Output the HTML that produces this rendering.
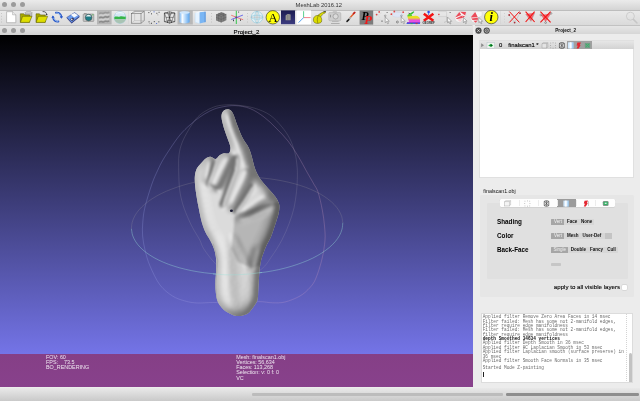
<!DOCTYPE html>
<html><head><meta charset="utf-8"><title>MeshLab 2016.12</title>
<style>

html,body{margin:0;padding:0;background:#e4e4e4;}
body{width:640px;height:401px;overflow:hidden;font-family:"Liberation Sans",sans-serif;}
#win{will-change:transform;position:relative;width:640px;height:401px;overflow:hidden;background:#ececec;}
.abs{position:absolute;}
.t{position:absolute;white-space:nowrap;line-height:1;color:#222;}
#titlebar{left:0;top:0;width:640px;height:10px;background:linear-gradient(#ebebeb,#d4d4d4);}
#toolbar{left:0;top:10px;width:640px;height:15px;background:linear-gradient(#e9e9e9,#dadada);border-top:0.5px solid #bdbdbd;box-sizing:border-box;}
#subtitle{left:0;top:25px;width:473.4px;height:10px;border-top-right-radius:1.5px;background:linear-gradient(#e8e8e8,#d2d2d2);border-top:0.5px solid #c2c2c2;box-sizing:border-box;}
#docktitle{left:474.5px;top:25px;width:165.5px;height:9.4px;background:linear-gradient(#e6e6e6,#d6d6d6);border-top:0.5px solid #c2c2c2;box-sizing:border-box;}
.dot{position:absolute;width:5px;height:5px;border-radius:50%;background:#9b9b9b;}
#gl{left:0;top:35.3px;width:473.2px;height:352.2px;background:linear-gradient(#000000,#8080ff);overflow:hidden;}
#band{left:0;top:318.5px;width:473.5px;height:34px;background:linear-gradient(#853f86,#88418c);}
#statusbar{left:0;top:388px;width:640px;height:13px;background:linear-gradient(#e9e9e9,#c9c9c9);}
.glt{position:absolute;white-space:nowrap;line-height:1;color:#eee6f0;font-size:5.4px;}

#glsvg{position:absolute;left:0;top:-0.3px;}

#dock{left:474px;top:35px;width:166px;height:353px;background:#ececec;}
#layers{left:479.4px;top:40.3px;width:155px;height:137.9px;background:#fff;border:0.5px solid #e0e0e0;box-sizing:border-box;}
#lrow{left:0;top:0;width:154px;height:8.2px;background:linear-gradient(#e6e6e6,#d2d2d2);}
#lsel{left:86.6px;top:0;width:24.8px;height:8.2px;background:#a0a0a0;}
.lt{font-size:5.9px;color:#000;top:1.6px;-webkit-text-stroke:0.12px #000;}
#gbox{left:480.2px;top:194.6px;width:153.8px;height:102px;background:#e6e6e6;border-radius:1.5px;}
#pane{left:487.3px;top:203px;width:140.7px;height:76px;background:#e0e0e0;border-radius:1px;}
#tabs{left:499.7px;top:198.6px;width:115.2px;height:8.8px;background:#fefefe;border-radius:1px;box-shadow:0 0.3px 0.5px rgba(0,0,0,.25);overflow:hidden;}
#tabs i{position:absolute;top:1.4px;width:0.5px;height:6px;background:#ececec;}
#tabsel{left:57.3px;top:0;width:19.2px;height:8.8px;background:#9b9b9b;}
.lab{font-size:6.3px;font-weight:bold;color:#000;left:497px;}
.seg{position:absolute;height:6.3px;background:#d7d7d7;border-radius:0.5px;}
.seg span{position:absolute;top:1.1px;font-size:4.5px;line-height:1;color:#111;white-space:nowrap;font-weight:bold;}
.seg b{position:absolute;left:0;top:0;height:6.3px;background:#a6a6a6;border-radius:0.5px 0 0 0.5px;}
.seg b span{color:#f0f0f0;font-weight:normal}
#logbox{left:480.5px;top:313px;width:152.2px;height:69.6px;background:#fff;border:0.5px solid #dcdcdc;box-sizing:border-box;overflow:hidden;}
.lg{position:absolute;left:1.2px;white-space:pre;font-family:"Liberation Mono",monospace;font-size:4.45px;line-height:1;color:#6c6c6c;}
.lg.b{font-weight:bold;color:#111;}

</style></head>
<body>
<div id="win">

<div id="titlebar" class="abs">
 <div class="dot" style="left:2px;top:2.3px"></div><div class="dot" style="left:11px;top:2.3px"></div><div class="dot" style="left:20px;top:2.3px"></div>
 <div class="t" style="left:295.6px;top:2.9px;font-size:5.8px;color:#333">MeshLab 2016.12</div>
</div>
<div id="toolbar" class="abs"></div>
<svg class="abs" style="left:0;top:10px" width="640" height="15" viewBox="0 10 640 15">
<rect x="1.3" y="13.00" width="0.7" height="0.9" fill="#b4b4b4"/><rect x="1.3" y="15.85" width="0.7" height="0.9" fill="#b4b4b4"/><rect x="1.3" y="18.70" width="0.7" height="0.9" fill="#b4b4b4"/><rect x="1.3" y="21.55" width="0.7" height="0.9" fill="#b4b4b4"/>
<path d="M6.6 11.7 H12.6 L15.8 14.8 V22.7 H6.6 Z" fill="#fff" stroke="#9a9a9a" stroke-width="0.6"/><path d="M12.6 11.7 V14.8 H15.8" fill="#eee" stroke="#9a9a9a" stroke-width="0.5"/>
<g><ellipse cx="28.6" cy="12.6" rx="3.3" ry="1.1" fill="#d8d8d8" stroke="#777" stroke-width="0.4"/><path d="M25.3 12.6 V16.4 H31.9 V12.6" fill="#bdbdbd" stroke="#777" stroke-width="0.4"/><path d="M20.3 13.8 H23.8 L24.8 14.9 H29.6 V22.3 H20.3 Z" fill="#a8a800" stroke="#55550a" stroke-width="0.5"/><path d="M22.6 16.3 H32 L29.4 22.4 H20.4 Z" fill="#dede00" stroke="#55550a" stroke-width="0.5"/></g>
<g><path d="M36.0 13.8 H39.5 L40.5 14.9 H45.3 V22.3 H36.0 Z" fill="#a8a800" stroke="#55550a" stroke-width="0.5"/><path d="M38.3 16.3 H47.7 L45.1 22.4 H36.1 Z" fill="#dede00" stroke="#55550a" stroke-width="0.5"/><path d="M42.6 11.6 C45 11.3 46.6 12.6 46.7 14.6" fill="none" stroke="#222" stroke-width="0.7"/><path d="M45.7 14.2 L46.8 15.6 L47.5 13.9Z" fill="#222"/></g>
<g fill="none" stroke-linecap="round"><path d="M56 12.7 C58.6 12.2 61 14 61.4 17" stroke="#2a58c8" stroke-width="1.9"/><path d="M56.6 12.9 C58.4 12.8 60.2 14.2 60.7 16.2" stroke="#a4ccf8" stroke-width="0.8"/><path d="M58.4 21.5 C55.8 22 53.4 20.2 53 17.2" stroke="#2a58c8" stroke-width="1.9"/><path d="M57.8 21.3 C56 21.4 54.2 20 53.7 18" stroke="#a4ccf8" stroke-width="0.8"/><path d="M59.8 16.6 L63 16.2 L61.6 18.8Z" fill="#2a58c8" stroke="none"/><path d="M54.6 17.6 L51.4 18 L52.8 15.4Z" fill="#2a58c8" stroke="none"/></g>
<g><path d="M66.8 17.4 L74.6 12.6 L79.4 16.2 L71.6 22.6 Z" fill="#6a9cf0" stroke="#2c3c88" stroke-width="0.5"/><path d="M70.8 14.8 L74.5 12.9 L77.8 15.2 L74.2 17.5 Z" fill="#fafafa"/><path d="M69.8 19.2 L72.6 17.5 L74.6 19.1 L72 21.2 Z" fill="#3a3a5a"/><path d="M70.6 19.3 L71.8 18.6 L72.8 19.4 L71.6 20.2Z" fill="#e8e8f0"/><path d="M71.6 22.6 L79.4 16.2 V17.2 L71.6 23.5 L66.8 18.3 V17.4Z" fill="#2c3c88"/></g>
<g><rect x="83.2" y="14.0" width="10.6" height="7.4" rx="0.6" fill="#c4c4c4" stroke="#777" stroke-width="0.5"/><rect x="84" y="13" width="2.6" height="1.2" fill="#999"/><circle cx="88.6" cy="17.6" r="3.3" fill="#1d7c86" stroke="#444" stroke-width="0.5"/><path d="M85.8 16.6 A3 3 0 0 1 91.4 16.6 Z" fill="#e8f4f4"/><rect x="92.4" y="14.4" width="0.9" height="0.9" fill="#3c3"/></g>
<rect x="97" y="10.2" width="14.6" height="14.3" fill="#b5b5b5"/>
<path d="M99.2 22.5 C101 20.1 102.6 23.1 104.2 21.6 C105.8 20.1 107.4 22.9 109.2 20.7" fill="none" stroke="#8a8a8a" stroke-width="1.5"/>
<path d="M99.2 20.3 C101 17.9 102.6 20.9 104.2 19.4 C105.8 17.9 107.4 20.7 109.2 18.5" fill="none" stroke="#d0d0d0" stroke-width="1.5"/>
<path d="M99.2 18.1 C101 15.7 102.6 18.7 104.2 17.2 C105.8 15.7 107.4 18.5 109.2 16.3" fill="none" stroke="#8a8a8a" stroke-width="1.5"/>
<path d="M99.2 15.9 C101 13.5 102.6 16.5 104.2 15.0 C105.8 13.5 107.4 16.3 109.2 14.1" fill="none" stroke="#d0d0d0" stroke-width="1.5"/>
<path d="M99.2 13.8 C101 11.4 102.6 14.4 104.2 12.9 C105.8 11.4 107.4 14.2 109.2 12.0" fill="none" stroke="#9a9a9a" stroke-width="1.5"/>
<g><circle cx="120" cy="17.5" r="5.9" fill="#d4e6f4" stroke="#8cc4dc" stroke-width="0.5"/><path d="M114.3 17.2 C116 15.8 118 17.4 120 16.4 C122 15.6 124 17 125.8 16.6 L125.7 19.2 L114.4 19.2Z" fill="#35b648"/><path d="M114.4 19.2 H125.7 C125 21.6 123 23.2 120 23.4 C117 23.2 115 21.6 114.4 19.2Z" fill="#a9c4b4"/><path d="M116 13.4 C118 12.4 122 12.4 124 13.4" stroke="#fff" stroke-width="0.8" fill="none"/></g>
<rect x="128.3" y="11" width="0.5" height="13" fill="#d0d0d0"/>
<g fill="#e4e4e4" stroke="#666" stroke-width="0.55"><rect x="131.4" y="13.6" width="9.6" height="9.6"/><path d="M131.4 13.6 L134.6 11.3 H144.3 L141 13.6 M144.3 11.3 V20.6 L141 23.2" fill="none"/><path d="M134.6 11.3 V20.6 H144.3 M134.6 20.6 L131.4 23.2" stroke="#aaa" stroke-width="0.4" fill="none"/></g>
<rect x="148.4" y="12.2" width="0.9" height="0.9" fill="#222"/><rect x="151.0" y="13.4" width="0.9" height="0.9" fill="#222"/><rect x="153.6" y="11.4" width="0.9" height="0.9" fill="#35c"/><rect x="156.4" y="12.8" width="0.9" height="0.9" fill="#222"/><rect x="158.6" y="11.8" width="0.9" height="0.9" fill="#222"/><rect x="150.0" y="11.2" width="0.9" height="0.9" fill="#999"/><rect x="148.6" y="21.4" width="0.9" height="0.9" fill="#222"/><rect x="151.0" y="22.8" width="0.9" height="0.9" fill="#222"/><rect x="153.8" y="21.2" width="0.9" height="0.9" fill="#222"/><rect x="156.2" y="23.0" width="0.9" height="0.9" fill="#35c"/><rect x="158.4" y="21.4" width="0.9" height="0.9" fill="#222"/><rect x="149.4" y="23.2" width="0.9" height="0.9" fill="#999"/><rect x="157.4" y="14.4" width="0.9" height="0.9" fill="#999"/>
<g fill="#e8e8e8" stroke="#222" stroke-width="0.55"><path d="M164.4 13 Q169.5 10.6 174.8 13 V21.6 Q169.5 24.4 164.4 21.6 Z"/><path d="M164.4 13 Q169.5 15 174.8 13 M164.4 21.6 Q169.5 19.4 174.8 21.6 M167.4 12 L171.6 23 M171.6 12 L167.4 23 M164.4 13 L168 23 M174.8 13 L171 23 M166 17.4 H173.4 M169.6 11.6 V23.6" fill="none" stroke-width="0.45"/></g>
<rect x="177.5" y="10.2" width="15.3" height="14.3" fill="#b7b7b7"/>
<defs><linearGradient id="cy" x1="0" x2="1"><stop offset="0" stop-color="#7db8f4"/><stop offset="0.28" stop-color="#f8fcff"/><stop offset="0.5" stop-color="#c4e0fb"/><stop offset="1" stop-color="#5aa4ee"/></linearGradient></defs>
<path d="M179.6 12.4 Q184.6 10.4 189.6 12.4 V22.2 Q184.6 24.6 179.6 22.2 Z" fill="url(#cy)"/><ellipse cx="184.6" cy="12.5" rx="5" ry="1.3" fill="#cfe6fc"/>
<g><path d="M195.2 13.0 L199.6 11.8 V23.6 L195.2 22.2 Z" fill="#e6f3ff"/><path d="M195.2 13.0 L198.6 11.5 L204.8 11.7 L199.6 12.6Z" fill="#f6fbff"/><path d="M199.6 12.2 L204.8 11.7 V22.2 L199.6 23.6 Z" fill="#7ab6f4"/><rect x="204.6" y="11.7" width="1" height="10.5" fill="#3c86dc"/><path d="M195.2 13.0 V22.2 L199.6 23.6" fill="none" stroke="#b4d8f8" stroke-width="0.4"/></g>
<rect x="211.2" y="13.00" width="0.7" height="0.9" fill="#b4b4b4"/><rect x="211.2" y="15.85" width="0.7" height="0.9" fill="#b4b4b4"/><rect x="211.2" y="18.70" width="0.7" height="0.9" fill="#b4b4b4"/><rect x="211.2" y="21.55" width="0.7" height="0.9" fill="#b4b4b4"/>
<g><path d="M216 14.4 L221.4 12 L226.4 14.2 V20.2 L221.2 22.6 L216 20.4 Z" fill="#7e7e7e"/><path d="M216 14.4 L221.2 16.4 L226.4 14.2 M221.2 16.4 V22.6 M218.6 13.2 V21.5 M223.8 13.1 V21.4 M216 17.4 L221.2 19.4 L226.4 17.2 M218.6 15.4 L223.8 13.1 M218.7 13.2 L224 15.2" stroke="#555" stroke-width="0.4" fill="none"/></g>
<g stroke-linecap="round"><path d="M231.6 15.4 L242.8 19.6" stroke="#f06060" stroke-width="0.8"/><path d="M231.6 19.4 L242.6 15.2" stroke="#5050e8" stroke-width="0.8"/><path d="M236.3 11.2 V23.6" stroke="#22c23c" stroke-width="0.9"/><circle cx="236.3" cy="17.4" r="0.9" fill="#7a2a9a"/><rect x="238.2" y="11.6" width="0.9" height="0.9" fill="#222"/><rect x="233" y="19.6" width="0.9" height="1.6" fill="#334"/><rect x="240" y="19.4" width="0.9" height="1.4" fill="#333"/></g>
<rect x="247.2" y="13.00" width="0.7" height="0.9" fill="#b4b4b4"/><rect x="247.2" y="15.85" width="0.7" height="0.9" fill="#b4b4b4"/><rect x="247.2" y="18.70" width="0.7" height="0.9" fill="#b4b4b4"/><rect x="247.2" y="21.55" width="0.7" height="0.9" fill="#b4b4b4"/>
<g fill="none" stroke="#86c6dc" stroke-width="0.55"><circle cx="257" cy="17.2" r="5.8" fill="#e6f0f4"/><ellipse cx="257" cy="17.2" rx="5.8" ry="2"/><ellipse cx="257" cy="17.2" rx="2.2" ry="5.8"/><path d="M257 11.4 V23 M251.2 17.2 H262.8" stroke="#999" stroke-width="0.4"/></g>
<circle cx="272.8" cy="17.3" r="6.7" fill="#ffff0a" stroke="#222" stroke-width="0.6"/><text x="272.9" y="21.9" font-family="Liberation Serif, serif" font-size="13.2" text-anchor="middle" fill="#000">A</text>
<defs><linearGradient id="dk" x1="0" y1="0" x2="0" y2="1"><stop offset="0" stop-color="#1c1c50"/><stop offset="1" stop-color="#3c3c80"/></linearGradient></defs><rect x="281" y="10.4" width="14" height="13.8" fill="url(#dk)"/><path d="M285.6 20.2 V15.4 Q288 13.2 290.6 14.6 V20.2 Z" fill="#9a9a96"/><path d="M287.4 15 V20 M289 14.4 V20" stroke="#666" stroke-width="0.4"/>
<rect x="296.5" y="10.4" width="14.5" height="14" fill="#fff"/><path d="M303.6 11.2 V17.6" stroke="#2fc270" stroke-width="0.8"/><path d="M303.6 17.6 H310.6" stroke="#f0606a" stroke-width="0.8"/><path d="M303.6 17.6 L298.6 22.6" stroke="#2f8ce8" stroke-width="0.8"/>
<g stroke="#55550a" stroke-width="0.5"><path d="M317.6 15.6 C319.6 14 322.4 11.6 325.6 11.6 L325.2 13 L323.6 13.6 C322 15 321 16.4 320.4 17.4 Z" fill="#d8d800"/><path d="M313.4 20 C313.2 16.6 316 15 318.6 15.6 C321.6 16.4 322.2 19.6 321.4 22 C320 23.6 317 23.8 315.4 23 C314 22.4 313.4 21.4 313.4 20Z" fill="#dcdc00"/><path d="M318.2 16 C317 18 317 21 318 23.2" fill="none"/></g><path d="M323.4 11.8 L325.8 11.4" stroke="#222" stroke-width="0.7"/>
<g><rect x="328.8" y="12.4" width="12" height="8.4" rx="1.2" fill="#cdcdcd" stroke="#a8a8a8" stroke-width="0.5"/><rect x="332.6" y="11.2" width="4.4" height="1.6" rx="0.5" fill="#bcbcbc"/><circle cx="335.6" cy="16.4" r="2.6" fill="#dadada" stroke="#8a8a8a" stroke-width="0.6"/><rect x="330" y="14.8" width="0.8" height="2.6" fill="#8a8a8a"/><path d="M332 21.4 H338.6" stroke="#b4b4b4" stroke-width="1"/><path d="M331 23.5 H339.6" stroke="#8e8e8e" stroke-width="0.6"/></g>
<g stroke-linecap="round"><path d="M350.2 17.6 L354.6 12.8" stroke="#e2602c" stroke-width="1.5"/><path d="M353.4 13.6 L354.8 12.4" stroke="#c02020" stroke-width="1.5"/><path d="M348.8 19.4 L350.4 17.6" stroke="#a8a8a8" stroke-width="1.6"/><path d="M347 21.4 L348.8 19.6" stroke="#1a1a1a" stroke-width="1.5"/></g>
<rect x="359.6" y="10.4" width="13.6" height="14.2" fill="#7c7c7c"/><text x="361.4" y="19.6" font-family="Liberation Serif, serif" font-style="italic" font-weight="bold" font-size="11.5" fill="#000">P</text><text x="364.2" y="24.4" font-family="Liberation Serif, serif" font-style="italic" font-weight="bold" font-size="12.5" fill="#f01818">P</text>
<g><path d="M375.6 12 L380 18 M376.4 16 L382 12.6 M375.6 20 H381" stroke="#d4d4d4" stroke-width="0.5"/><circle cx="379.2" cy="11.9" r="0.9" fill="#e04848"/><circle cx="376.6" cy="14.6" r="0.9" fill="#e04848"/><rect x="386.4" y="12" width="1.6" height="1" fill="#999"/><rect x="381.2" y="20.4" width="1.6" height="1.6" fill="#999"/><circle cx="385.2" cy="15.8" r="0.8" fill="none" stroke="#555" stroke-width="0.4"/><path d="M385.2 17.0 l0 5.6 l1.3 -1.2 l1.1 2.4 l0.9 -0.4 l-1.0 -2.3 l1.8 0 Z" fill="#fafafa" stroke="#555" stroke-width="0.4"/></g>
<g><ellipse cx="397.4" cy="14.6" rx="5.4" ry="2.6" fill="#dfe6f6" stroke="#c4cce4" stroke-width="0.4"/><path d="M394.4 11.6 L402.8 12.2 M391.4 14.2 L394.4 11.6" stroke="#c8c8d8" stroke-width="0.4"/><circle cx="394.3" cy="11.5" r="0.9" fill="#e04848"/><circle cx="391.4" cy="14.2" r="0.9" fill="#e04848"/><circle cx="403.2" cy="12.2" r="0.9" fill="#e04848"/><circle cx="397.4" cy="22" r="1" fill="none" stroke="#444" stroke-width="0.5"/><circle cx="401.4" cy="15.8" r="0.8" fill="none" stroke="#555" stroke-width="0.4"/><path d="M401.2 17.0 l0 5.6 l1.3 -1.2 l1.1 2.4 l0.9 -0.4 l-1.0 -2.3 l1.8 0 Z" fill="#fafafa" stroke="#555" stroke-width="0.4"/></g>
<g><path d="M409.6 13.8 L413.6 11.2 L414.4 12 L411.6 14.6 Z" fill="#30c030"/><path d="M408.4 12.4 L410.4 14 L409.6 15Z" fill="#222"/><path d="M407.4 15.8 C407.2 14.2 410 13.6 411.6 14.4 L412.4 16.4 L407.8 17Z" fill="#58d030"/><path d="M407.4 16.4 L415.6 15.8 C418 16 419.6 17.2 419.8 18.4 L408 18.6Z" fill="#e8e020"/><path d="M408 18.4 H419.9 V19.8 H408.4Z" fill="#f09030"/><path d="M408.4 19.6 H420 V22 H409Z" fill="#e850e0"/><path d="M407 22 H420.2 V23 H407Z" fill="#9040d0"/><path d="M406.6 23 H420 V24 H406.6Z" fill="#4060e0"/><rect x="410.6" y="23.2" width="2" height="0.9" fill="#30b040"/><rect x="415.6" y="23.2" width="2" height="0.9" fill="#d03030"/></g>
<g><path d="M423.8 13.8 L433.4 20.8 M433.4 13.8 L423.8 20.8" stroke="#f21414" stroke-width="2.6"/><circle cx="428.6" cy="12" r="1.3" fill="#2c50e8"/><path d="M428.6 12 V15" stroke="#2c50e8" stroke-width="0.7"/><text x="428.6" y="24" font-size="2.9" text-anchor="middle" font-weight="bold" fill="#333" font-family="Liberation Sans, sans-serif">GEOREF</text></g>
<g><path d="M438.4 11.6 H446.6 V16.6 H438.4" fill="none" stroke="#c4c4c4" stroke-width="0.5"/><path d="M446.6 16.6 V21.4 L444 22.4 M446.6 21.4 L449 22.6" stroke="#aaa" stroke-width="0.5" fill="none"/><rect x="438.2" y="13.8" width="1.3" height="1.3" fill="#d83838"/><rect x="449.4" y="12" width="1.6" height="1" fill="#999"/><path d="M447.6 17.2 l0 5.6 l1.3 -1.2 l1.1 2.4 l0.9 -0.4 l-1.0 -2.3 l1.8 0 Z" fill="#fafafa" stroke="#555" stroke-width="0.4"/></g>
<g transform="translate(454.2 0)"><path d="M0.2 17.6 L5.2 11.4 L12 11.8 L11.4 16.6 L6.2 22.6 L2.2 21.6 Z" fill="#f6f6f6" stroke="#c4c4c4" stroke-width="0.3"/><path d="M0.8 17.4 L5.2 12 L7 15 Z M1.6 18.4 L7.4 15.8 L9 18 L2.8 19Z M5.8 11.8 L11.8 12 L11 15.6 Z M7.4 15.6 L10.8 16.2 L9.4 17.8Z" fill="#ea4a58"/><path d="M3 19.6 L8.4 18.8 L6 22 Z" fill="#f8d0d4"/><path d="M9.2 17.6 l0 5.0 l1.2 -1.1 l1.0 2.2 l0.8 -0.4 l-0.9 -2.1 l1.6 0 Z" fill="#fafafa" stroke="#555" stroke-width="0.4"/></g>
<g transform="translate(469.4 0)"><path d="M0.4 17.6 L6 11.2 L12.6 11.6 V15.8 L9.8 17 L6 23 L2.8 22 Z" fill="#f6f6f6" stroke="#c4c4c4" stroke-width="0.3"/><path d="M1.2 17.4 L5.8 12 L8.4 17.2 Z M1.8 18.4 L8.4 17.8 L8.6 19.8 L3.2 20Z M4 20.8 L8.4 20.4 L6.2 22.8Z" fill="#ea4a58"/><path d="M9.4 17.4 l0 5.3 l1.2 -1.1 l1.0 2.3 l0.9 -0.4 l-0.9 -2.2 l1.7 0 Z" fill="#fafafa" stroke="#555" stroke-width="0.4"/></g>
<circle cx="491.3" cy="17.1" r="6.7" fill="#ffff0a" stroke="#222" stroke-width="0.6"/><text x="491.2" y="21.4" font-family="Liberation Serif, serif" font-style="italic" font-weight="bold" font-size="12.4" text-anchor="middle" fill="#000">i</text>
<rect x="500.4" y="11" width="0.5" height="13" fill="#d0d0d0"/>
<rect x="504.3" y="13.00" width="0.7" height="0.9" fill="#c4c4c4"/><rect x="504.3" y="15.85" width="0.7" height="0.9" fill="#c4c4c4"/><rect x="504.3" y="18.70" width="0.7" height="0.9" fill="#c4c4c4"/><rect x="504.3" y="21.55" width="0.7" height="0.9" fill="#c4c4c4"/>
<g><path d="M509 15 L514.6 22.4 L520 13.2" fill="none" stroke="#aaa" stroke-width="0.4"/><circle cx="509.2" cy="15" r="0.9" fill="#a83038"/><circle cx="520" cy="13.2" r="0.9" fill="#a83038"/><circle cx="514.6" cy="22.6" r="0.9" fill="#a83038"/><path d="M509.4 11.6 L519.4 22.4 M519.4 11.6 L509.4 22.4" stroke="#f21414" stroke-width="1"/></g>
<g><path d="M525.6 14 L534.8 12.8 L531 21.4 Z" fill="#f06a74"/><path d="M525.6 14 L531 21.4 L534.8 12.8" fill="none" stroke="#999" stroke-width="0.4"/><path d="M525.6 11.6 L534.6 22 M534.6 11.6 L525.6 22" stroke="#f21414" stroke-width="1.1"/></g>
<g><path d="M541 15 L551 13.4 L545.6 22 Z" fill="#f06a74"/><circle cx="540.8" cy="15" r="0.9" fill="none" stroke="#444" stroke-width="0.4"/><circle cx="551" cy="13.4" r="0.9" fill="none" stroke="#444" stroke-width="0.4"/><circle cx="545.6" cy="22.6" r="0.9" fill="none" stroke="#444" stroke-width="0.4"/><path d="M540.4 11.6 L550.6 22.4 M550.6 11.6 L540.4 22.4" stroke="#f21414" stroke-width="1.1"/></g>
<g fill="none" stroke="#c6c6c6"><circle cx="630.4" cy="16.2" r="4" stroke-width="0.8"/><path d="M633.4 19.4 L637 23" stroke-width="1.5" stroke-linecap="round"/></g>
</svg>
<div id="subtitle" class="abs">
 <div class="dot" style="left:2px;top:2.2px"></div><div class="dot" style="left:10.9px;top:2.2px"></div><div class="dot" style="left:19.9px;top:2.2px"></div>
 <div class="t" style="left:233.6px;top:2.7px;font-size:6.1px;color:#000;-webkit-text-stroke:0.12px #000">Project_2</div>
</div>
<div id="docktitle" class="abs">
 <svg class="abs" style="left:0.1px;top:0.7px" width="16" height="8" viewBox="0 0 16 8"><circle cx="3.5" cy="3.6" r="3.1" fill="#4a4a4a"/><path d="M2.3 2.4 L4.7 4.8 M4.7 2.4 L2.3 4.8" stroke="#e8e8e8" stroke-width="0.8"/><circle cx="11.7" cy="3.6" r="3.1" fill="#4a4a4a"/><circle cx="11.8" cy="3.6" r="1.7" fill="none" stroke="#e0e0e0" stroke-width="0.6"/><path d="M10.8 4.6 L12.8 2.6" stroke="#e0e0e0" stroke-width="0.6"/></svg>
 <div class="t" style="left:80.8px;top:3.1px;font-size:4.6px;color:#111;font-weight:bold">Project_2</div>
</div>


<div id="gl" class="abs">
 <svg id="glsvg" width="474" height="353" viewBox="0 35 474 353">
  <defs>
   <linearGradient id="hg" gradientUnits="userSpaceOnUse" x1="196" y1="0" x2="278" y2="0">
    <stop offset="0" stop-color="#cfcfcf"/><stop offset="0.35" stop-color="#d8d8d8"/><stop offset="0.7" stop-color="#b4b4b4"/><stop offset="1" stop-color="#8c8c8c"/>
   </linearGradient>
   <clipPath id="hc"><path d="M227.5 109.3C228.9 109.3 230.4 109.9 231.6 111.2C232.8 112.5 233.5 114.7 234.4 117.0C235.3 119.3 235.9 121.6 237.2 125.0C238.5 128.4 240.5 133.8 242.4 137.5C244.3 141.2 247.0 144.2 248.6 147.5C250.2 150.8 251.1 154.4 252.0 157.5C252.9 160.6 253.4 163.5 254.2 166.0C255.0 168.5 255.5 170.1 256.6 172.4C257.7 174.7 259.4 177.7 261.0 180.0C262.6 182.3 264.3 184.0 266.0 186.0C267.7 188.0 269.6 189.9 271.4 192.0C273.1 194.1 275.2 196.3 276.5 198.5C277.8 200.7 278.9 202.5 279.3 205.0C279.7 207.5 279.2 210.6 278.6 213.5C278.0 216.4 276.8 219.8 275.9 222.5C275.0 225.2 274.3 227.5 273.4 230.0C272.5 232.5 271.8 235.0 270.7 237.5C269.6 240.0 267.9 242.5 266.7 245.0C265.5 247.5 264.6 250.0 263.7 252.5C262.8 255.0 261.9 257.1 261.2 260.0C260.5 262.9 260.0 266.7 259.6 270.0C259.2 273.3 259.1 276.7 258.9 280.0C258.7 283.3 258.5 286.7 258.3 290.0C258.1 293.3 258.2 297.3 257.5 300.0C256.8 302.7 255.3 304.3 254.2 306.0C253.1 307.7 252.1 308.9 251.0 310.2C249.9 311.5 249.1 312.8 247.4 313.8C245.7 314.8 243.2 315.7 241.0 316.0C238.8 316.3 235.9 315.8 234.0 315.4C232.1 315.0 231.3 314.5 229.6 313.6C227.9 312.7 225.6 311.3 224.0 310.0C222.4 308.7 221.2 307.3 220.0 305.6C218.8 303.9 217.7 302.2 217.0 299.6C216.3 297.0 215.8 293.3 215.6 290.0C215.3 286.7 215.4 283.3 215.5 280.0C215.6 276.7 216.1 273.3 216.2 270.0C216.3 266.7 216.5 263.3 216.2 260.0C215.9 256.7 215.4 253.3 214.4 250.0C213.4 246.7 211.5 242.9 210.0 240.0C208.5 237.1 206.9 235.3 205.6 232.5C204.3 229.7 203.2 227.2 202.0 223.0C200.8 218.8 199.7 213.0 198.6 207.5C197.5 202.0 196.2 195.1 195.6 190.0C195.0 184.9 194.6 180.5 194.8 177.0C195.0 173.5 195.7 171.1 196.6 169.0C197.5 166.9 198.8 165.8 200.0 164.4C201.2 163.0 202.4 161.6 203.6 160.4C204.8 159.2 206.1 158.0 207.4 157.4C208.7 156.8 210.0 156.7 211.4 157.0C212.8 157.3 214.2 159.3 215.6 159.0C217.0 158.7 218.2 156.2 219.6 155.2C221.0 154.2 222.4 153.5 224.0 153.2C225.6 152.9 227.9 154.2 229.0 153.2C230.1 152.2 230.7 149.6 230.4 147.0C230.1 144.4 228.3 140.8 227.2 137.5C226.1 134.2 224.5 130.4 223.6 127.0C222.7 123.6 221.6 119.6 221.5 117.0C221.4 114.4 222.0 112.7 223.0 111.4C224.0 110.1 226.1 109.3 227.5 109.3Z"/></clipPath>
   <filter id="b1" x="-30%" y="-30%" width="160%" height="160%"><feGaussianBlur stdDeviation="1.2"/></filter>
   <filter id="b2" x="-30%" y="-30%" width="160%" height="160%"><feGaussianBlur stdDeviation="2.4"/></filter>
   <filter id="b3" x="-30%" y="-30%" width="160%" height="160%"><feGaussianBlur stdDeviation="4"/></filter>
   <filter id="b0" x="-30%" y="-30%" width="160%" height="160%"><feGaussianBlur stdDeviation="0.6"/></filter>
   <filter id="lit" filterUnits="userSpaceOnUse" x="170" y="90" width="140" height="250" color-interpolation-filters="sRGB"><feColorMatrix in="SourceGraphic" type="matrix" values="0 0 0 0 0  0 0 0 0 0  0 0 0 0 0  1 0 0 0 0" result="h"/><feDiffuseLighting in="h" surfaceScale="32.00" diffuseConstant="1.00" lighting-color="#ffffff" result="d"><feDistantLight azimuth="205" elevation="64"/></feDiffuseLighting><feComponentTransfer in="d" result="e"><feFuncR type="linear" slope="0.450" intercept="0.455"/><feFuncG type="linear" slope="0.450" intercept="0.455"/><feFuncB type="linear" slope="0.450" intercept="0.455"/></feComponentTransfer><feGaussianBlur in="e" stdDeviation="0.80"/></filter><filter id="h9" filterUnits="userSpaceOnUse" x="150" y="70" width="180" height="290" color-interpolation-filters="sRGB"><feGaussianBlur stdDeviation="9.00"/></filter><filter id="h7" filterUnits="userSpaceOnUse" x="150" y="70" width="180" height="290" color-interpolation-filters="sRGB"><feGaussianBlur stdDeviation="7.00"/></filter><filter id="h6" filterUnits="userSpaceOnUse" x="150" y="70" width="180" height="290" color-interpolation-filters="sRGB"><feGaussianBlur stdDeviation="6.00"/></filter><filter id="h4" filterUnits="userSpaceOnUse" x="150" y="70" width="180" height="290" color-interpolation-filters="sRGB"><feGaussianBlur stdDeviation="4.00"/></filter><filter id="h3" filterUnits="userSpaceOnUse" x="150" y="70" width="180" height="290" color-interpolation-filters="sRGB"><feGaussianBlur stdDeviation="3.00"/></filter><filter id="h25" filterUnits="userSpaceOnUse" x="150" y="70" width="180" height="290" color-interpolation-filters="sRGB"><feGaussianBlur stdDeviation="2.50"/></filter><filter id="h2" filterUnits="userSpaceOnUse" x="150" y="70" width="180" height="290" color-interpolation-filters="sRGB"><feGaussianBlur stdDeviation="2.00"/></filter><filter id="h1" filterUnits="userSpaceOnUse" x="150" y="70" width="180" height="290" color-interpolation-filters="sRGB"><feGaussianBlur stdDeviation="1.00"/></filter><filter id="h15" filterUnits="userSpaceOnUse" x="150" y="70" width="180" height="290" color-interpolation-filters="sRGB"><feGaussianBlur stdDeviation="1.50"/></filter>
  </defs>
  <defs><linearGradient id="tb" gradientUnits="userSpaceOnUse" x1="142" y1="0" x2="325" y2="0"><stop offset="0" stop-color="#98a2ea"/><stop offset="0.5" stop-color="#b0a0dc"/><stop offset="1" stop-color="#d69cc0"/></linearGradient></defs><path d="M235.0 105.6C240.0 105.8 245.2 106.6 250.0 108.5C254.8 110.4 259.7 113.8 264.0 117.0C268.3 120.2 272.0 124.0 276.0 128.0C280.0 132.0 284.3 136.3 288.0 141.0C291.7 145.7 294.8 150.7 298.0 156.0C301.2 161.3 304.9 168.4 307.5 173.0C310.1 177.6 311.8 180.3 313.5 183.5C315.2 186.7 316.5 187.6 318.0 192.0C319.5 196.4 321.2 204.3 322.3 210.0C323.4 215.7 324.1 221.0 324.5 226.0C324.9 231.0 325.4 234.5 325.0 240.0C324.6 245.5 323.5 252.7 322.0 259.0C320.5 265.3 318.0 273.2 316.0 278.0C314.0 282.8 312.7 284.5 310.0 287.5C307.3 290.5 304.2 293.6 300.0 296.0C295.8 298.4 289.6 300.9 285.0 302.0C280.4 303.1 276.9 302.9 272.5 302.8C268.1 302.7 264.8 301.6 258.8 301.6C252.7 301.6 243.5 302.9 236.0 303.0C228.5 303.1 220.2 302.5 213.8 302.5C207.3 302.5 202.3 303.2 197.5 303.0C192.7 302.8 189.2 302.2 185.0 301.0C180.8 299.8 176.7 298.7 172.5 296.0C168.3 293.3 163.8 290.0 160.0 285.0C156.2 280.0 152.5 271.8 150.0 266.0C147.5 260.2 146.2 255.0 145.0 250.0C143.8 245.0 143.0 240.7 142.6 236.0C142.2 231.3 142.4 226.8 142.8 222.0C143.2 217.2 143.5 213.3 145.0 207.0C146.5 200.7 149.8 190.1 151.9 184.0C154.0 177.9 155.8 174.5 157.6 170.5C159.4 166.5 160.8 163.6 162.9 160.0C165.0 156.4 167.2 153.1 170.0 148.9C172.8 144.7 176.7 138.9 180.0 134.9C183.3 130.9 186.7 127.9 190.0 124.9C193.3 121.9 196.6 119.3 199.9 117.0C203.2 114.7 206.6 112.6 209.9 111.0C213.2 109.4 215.7 108.3 219.9 107.4C224.1 106.5 230.0 105.4 235.0 105.6Z" fill="none" stroke="url(#tb)" stroke-width="0.6" opacity="0.45"/><path d="M235.9 105.0C240.9 105.5 248.3 106.3 254.0 108.0C259.7 109.7 265.2 111.8 269.9 115.0C274.5 118.2 278.6 122.9 281.9 126.9C285.2 130.9 287.7 134.6 289.9 138.9C292.1 143.2 293.7 148.6 294.9 152.9C296.1 157.2 296.5 161.1 296.9 164.9C297.3 168.8 297.5 171.5 297.4 176.0C297.3 180.5 297.1 186.6 296.5 191.9C295.9 197.2 295.2 202.6 294.0 207.9C292.8 213.2 291.0 218.6 289.0 223.9C287.0 229.2 284.8 234.5 282.0 239.8C279.2 245.2 275.5 251.1 272.0 256.0C268.5 260.9 266.7 265.0 261.0 269.5C255.3 274.0 245.6 283.9 238.0 283.0C230.4 282.1 221.4 269.6 215.7 263.9C210.0 258.2 206.5 252.9 203.8 248.9C201.2 244.9 201.5 243.2 199.8 240.0C198.2 236.8 195.7 233.3 193.9 230.0C192.1 226.7 190.7 224.2 188.9 220.0C187.1 215.8 184.5 210.0 183.0 205.0C181.5 200.0 180.4 195.5 179.7 190.0C179.0 184.5 178.8 177.8 178.7 172.0C178.6 166.2 178.4 159.8 179.0 154.9C179.6 150.1 180.5 146.9 182.0 142.9C183.5 138.9 185.7 134.9 188.0 130.9C190.3 126.9 193.2 122.2 195.9 119.0C198.6 115.8 200.9 114.0 203.9 112.0C206.9 110.0 210.6 108.2 213.9 107.0C217.2 105.8 220.2 105.3 223.9 105.0C227.6 104.7 230.9 104.5 235.9 105.0Z" fill="none" stroke="#a8a4b8" stroke-width="0.55" opacity="0.36"/><path d="M131.4 228.8C131.6 227.7 131.6 224.5 132.2 222.4C132.7 220.3 133.6 218.2 134.7 216.1C135.8 214.0 137.3 211.9 139.0 209.9C140.7 207.9 142.7 206.0 144.9 204.1C147.2 202.2 149.7 200.3 152.4 198.6C155.2 196.8 158.2 195.1 161.4 193.5C164.6 191.9 168.1 190.4 171.7 189.1C175.3 187.7 179.1 186.4 183.1 185.2C187.0 184.0 191.2 183.0 195.4 182.0C199.6 181.1 204.0 180.3 208.4 179.6C212.9 179.0 217.4 178.4 222.0 178.0C226.5 177.6 231.1 177.3 235.7 177.2C240.3 177.1 245.0 177.1 249.5 177.2C254.1 177.4 258.7 177.7 263.1 178.1C267.6 178.5 272.0 179.1 276.3 179.8C280.5 180.5 284.7 181.3 288.8 182.3C292.8 183.2 296.7 184.3 300.3 185.5C304.0 186.6 307.6 188.0 310.9 189.4C314.1 190.8 317.3 192.3 320.1 193.9C322.9 195.5 325.6 197.2 327.9 199.0C330.3 200.7 332.4 202.6 334.2 204.5C336.0 206.4 337.6 208.4 338.8 210.4C340.1 212.4 341.0 214.5 341.7 216.5C342.3 218.6 342.6 221.8 342.8 222.8" fill="none" stroke="#b4aca8" stroke-width="0.55" opacity="0.36"/><path d="M342.8 222.8C342.6 223.9 342.6 227.1 342.0 229.2C341.5 231.3 340.6 233.4 339.5 235.5C338.4 237.6 336.9 239.7 335.2 241.7C333.5 243.7 331.5 245.6 329.3 247.5C327.0 249.4 324.5 251.3 321.8 253.0C319.0 254.8 316.0 256.5 312.8 258.1C309.6 259.7 306.1 261.2 302.5 262.5C298.9 263.9 295.1 265.2 291.1 266.4C287.2 267.6 283.0 268.6 278.8 269.6C274.6 270.5 270.2 271.3 265.8 272.0C261.3 272.6 256.8 273.2 252.2 273.6C247.7 274.0 243.1 274.3 238.5 274.4C233.9 274.5 229.2 274.5 224.7 274.4C220.1 274.2 215.5 273.9 211.1 273.5C206.6 273.1 202.2 272.5 197.9 271.8C193.7 271.1 189.5 270.3 185.4 269.3C181.4 268.4 177.5 267.3 173.9 266.1C170.2 265.0 166.6 263.6 163.3 262.2C160.1 260.8 156.9 259.3 154.1 257.7C151.3 256.1 148.6 254.4 146.3 252.6C143.9 250.9 141.8 249.0 140.0 247.1C138.2 245.2 136.6 243.2 135.4 241.2C134.1 239.2 133.2 237.1 132.5 235.1C131.9 233.0 131.6 229.8 131.4 228.8" fill="none" stroke="#98e0d8" stroke-width="0.65" opacity="0.6"/>
  <path d="M227.5 109.3C228.9 109.3 230.4 109.9 231.6 111.2C232.8 112.5 233.5 114.7 234.4 117.0C235.3 119.3 235.9 121.6 237.2 125.0C238.5 128.4 240.5 133.8 242.4 137.5C244.3 141.2 247.0 144.2 248.6 147.5C250.2 150.8 251.1 154.4 252.0 157.5C252.9 160.6 253.4 163.5 254.2 166.0C255.0 168.5 255.5 170.1 256.6 172.4C257.7 174.7 259.4 177.7 261.0 180.0C262.6 182.3 264.3 184.0 266.0 186.0C267.7 188.0 269.6 189.9 271.4 192.0C273.1 194.1 275.2 196.3 276.5 198.5C277.8 200.7 278.9 202.5 279.3 205.0C279.7 207.5 279.2 210.6 278.6 213.5C278.0 216.4 276.8 219.8 275.9 222.5C275.0 225.2 274.3 227.5 273.4 230.0C272.5 232.5 271.8 235.0 270.7 237.5C269.6 240.0 267.9 242.5 266.7 245.0C265.5 247.5 264.6 250.0 263.7 252.5C262.8 255.0 261.9 257.1 261.2 260.0C260.5 262.9 260.0 266.7 259.6 270.0C259.2 273.3 259.1 276.7 258.9 280.0C258.7 283.3 258.5 286.7 258.3 290.0C258.1 293.3 258.2 297.3 257.5 300.0C256.8 302.7 255.3 304.3 254.2 306.0C253.1 307.7 252.1 308.9 251.0 310.2C249.9 311.5 249.1 312.8 247.4 313.8C245.7 314.8 243.2 315.7 241.0 316.0C238.8 316.3 235.9 315.8 234.0 315.4C232.1 315.0 231.3 314.5 229.6 313.6C227.9 312.7 225.6 311.3 224.0 310.0C222.4 308.7 221.2 307.3 220.0 305.6C218.8 303.9 217.7 302.2 217.0 299.6C216.3 297.0 215.8 293.3 215.6 290.0C215.3 286.7 215.4 283.3 215.5 280.0C215.6 276.7 216.1 273.3 216.2 270.0C216.3 266.7 216.5 263.3 216.2 260.0C215.9 256.7 215.4 253.3 214.4 250.0C213.4 246.7 211.5 242.9 210.0 240.0C208.5 237.1 206.9 235.3 205.6 232.5C204.3 229.7 203.2 227.2 202.0 223.0C200.8 218.8 199.7 213.0 198.6 207.5C197.5 202.0 196.2 195.1 195.6 190.0C195.0 184.9 194.6 180.5 194.8 177.0C195.0 173.5 195.7 171.1 196.6 169.0C197.5 166.9 198.8 165.8 200.0 164.4C201.2 163.0 202.4 161.6 203.6 160.4C204.8 159.2 206.1 158.0 207.4 157.4C208.7 156.8 210.0 156.7 211.4 157.0C212.8 157.3 214.2 159.3 215.6 159.0C217.0 158.7 218.2 156.2 219.6 155.2C221.0 154.2 222.4 153.5 224.0 153.2C225.6 152.9 227.9 154.2 229.0 153.2C230.1 152.2 230.7 149.6 230.4 147.0C230.1 144.4 228.3 140.8 227.2 137.5C226.1 134.2 224.5 130.4 223.6 127.0C222.7 123.6 221.6 119.6 221.5 117.0C221.4 114.4 222.0 112.7 223.0 111.4C224.0 110.1 226.1 109.3 227.5 109.3Z" fill="#bbb"/>
  <g clip-path="url(#hc)">
   <g filter="url(#lit)">
    <rect x="150" y="70" width="180" height="290" fill="#000"/>
    <path d="M227.5 109.3C228.9 109.3 230.4 109.9 231.6 111.2C232.8 112.5 233.5 114.7 234.4 117.0C235.3 119.3 235.9 121.6 237.2 125.0C238.5 128.4 240.5 133.8 242.4 137.5C244.3 141.2 247.0 144.2 248.6 147.5C250.2 150.8 251.1 154.4 252.0 157.5C252.9 160.6 253.4 163.5 254.2 166.0C255.0 168.5 255.5 170.1 256.6 172.4C257.7 174.7 259.4 177.7 261.0 180.0C262.6 182.3 264.3 184.0 266.0 186.0C267.7 188.0 269.6 189.9 271.4 192.0C273.1 194.1 275.2 196.3 276.5 198.5C277.8 200.7 278.9 202.5 279.3 205.0C279.7 207.5 279.2 210.6 278.6 213.5C278.0 216.4 276.8 219.8 275.9 222.5C275.0 225.2 274.3 227.5 273.4 230.0C272.5 232.5 271.8 235.0 270.7 237.5C269.6 240.0 267.9 242.5 266.7 245.0C265.5 247.5 264.6 250.0 263.7 252.5C262.8 255.0 261.9 257.1 261.2 260.0C260.5 262.9 260.0 266.7 259.6 270.0C259.2 273.3 259.1 276.7 258.9 280.0C258.7 283.3 258.5 286.7 258.3 290.0C258.1 293.3 258.2 297.3 257.5 300.0C256.8 302.7 255.3 304.3 254.2 306.0C253.1 307.7 252.1 308.9 251.0 310.2C249.9 311.5 249.1 312.8 247.4 313.8C245.7 314.8 243.2 315.7 241.0 316.0C238.8 316.3 235.9 315.8 234.0 315.4C232.1 315.0 231.3 314.5 229.6 313.6C227.9 312.7 225.6 311.3 224.0 310.0C222.4 308.7 221.2 307.3 220.0 305.6C218.8 303.9 217.7 302.2 217.0 299.6C216.3 297.0 215.8 293.3 215.6 290.0C215.3 286.7 215.4 283.3 215.5 280.0C215.6 276.7 216.1 273.3 216.2 270.0C216.3 266.7 216.5 263.3 216.2 260.0C215.9 256.7 215.4 253.3 214.4 250.0C213.4 246.7 211.5 242.9 210.0 240.0C208.5 237.1 206.9 235.3 205.6 232.5C204.3 229.7 203.2 227.2 202.0 223.0C200.8 218.8 199.7 213.0 198.6 207.5C197.5 202.0 196.2 195.1 195.6 190.0C195.0 184.9 194.6 180.5 194.8 177.0C195.0 173.5 195.7 171.1 196.6 169.0C197.5 166.9 198.8 165.8 200.0 164.4C201.2 163.0 202.4 161.6 203.6 160.4C204.8 159.2 206.1 158.0 207.4 157.4C208.7 156.8 210.0 156.7 211.4 157.0C212.8 157.3 214.2 159.3 215.6 159.0C217.0 158.7 218.2 156.2 219.6 155.2C221.0 154.2 222.4 153.5 224.0 153.2C225.6 152.9 227.9 154.2 229.0 153.2C230.1 152.2 230.7 149.6 230.4 147.0C230.1 144.4 228.3 140.8 227.2 137.5C226.1 134.2 224.5 130.4 223.6 127.0C222.7 123.6 221.6 119.6 221.5 117.0C221.4 114.4 222.0 112.7 223.0 111.4C224.0 110.1 226.1 109.3 227.5 109.3Z" fill="#fff" opacity="0.36" filter="url(#h6)"/>
    <path d="M227.5 109.3C228.9 109.3 230.4 109.9 231.6 111.2C232.8 112.5 233.5 114.7 234.4 117.0C235.3 119.3 235.9 121.6 237.2 125.0C238.5 128.4 240.5 133.8 242.4 137.5C244.3 141.2 247.0 144.2 248.6 147.5C250.2 150.8 251.1 154.4 252.0 157.5C252.9 160.6 253.4 163.5 254.2 166.0C255.0 168.5 255.5 170.1 256.6 172.4C257.7 174.7 259.4 177.7 261.0 180.0C262.6 182.3 264.3 184.0 266.0 186.0C267.7 188.0 269.6 189.9 271.4 192.0C273.1 194.1 275.2 196.3 276.5 198.5C277.8 200.7 278.9 202.5 279.3 205.0C279.7 207.5 279.2 210.6 278.6 213.5C278.0 216.4 276.8 219.8 275.9 222.5C275.0 225.2 274.3 227.5 273.4 230.0C272.5 232.5 271.8 235.0 270.7 237.5C269.6 240.0 267.9 242.5 266.7 245.0C265.5 247.5 264.6 250.0 263.7 252.5C262.8 255.0 261.9 257.1 261.2 260.0C260.5 262.9 260.0 266.7 259.6 270.0C259.2 273.3 259.1 276.7 258.9 280.0C258.7 283.3 258.5 286.7 258.3 290.0C258.1 293.3 258.2 297.3 257.5 300.0C256.8 302.7 255.3 304.3 254.2 306.0C253.1 307.7 252.1 308.9 251.0 310.2C249.9 311.5 249.1 312.8 247.4 313.8C245.7 314.8 243.2 315.7 241.0 316.0C238.8 316.3 235.9 315.8 234.0 315.4C232.1 315.0 231.3 314.5 229.6 313.6C227.9 312.7 225.6 311.3 224.0 310.0C222.4 308.7 221.2 307.3 220.0 305.6C218.8 303.9 217.7 302.2 217.0 299.6C216.3 297.0 215.8 293.3 215.6 290.0C215.3 286.7 215.4 283.3 215.5 280.0C215.6 276.7 216.1 273.3 216.2 270.0C216.3 266.7 216.5 263.3 216.2 260.0C215.9 256.7 215.4 253.3 214.4 250.0C213.4 246.7 211.5 242.9 210.0 240.0C208.5 237.1 206.9 235.3 205.6 232.5C204.3 229.7 203.2 227.2 202.0 223.0C200.8 218.8 199.7 213.0 198.6 207.5C197.5 202.0 196.2 195.1 195.6 190.0C195.0 184.9 194.6 180.5 194.8 177.0C195.0 173.5 195.7 171.1 196.6 169.0C197.5 166.9 198.8 165.8 200.0 164.4C201.2 163.0 202.4 161.6 203.6 160.4C204.8 159.2 206.1 158.0 207.4 157.4C208.7 156.8 210.0 156.7 211.4 157.0C212.8 157.3 214.2 159.3 215.6 159.0C217.0 158.7 218.2 156.2 219.6 155.2C221.0 154.2 222.4 153.5 224.0 153.2C225.6 152.9 227.9 154.2 229.0 153.2C230.1 152.2 230.7 149.6 230.4 147.0C230.1 144.4 228.3 140.8 227.2 137.5C226.1 134.2 224.5 130.4 223.6 127.0C222.7 123.6 221.6 119.6 221.5 117.0C221.4 114.4 222.0 112.7 223.0 111.4C224.0 110.1 226.1 109.3 227.5 109.3Z" fill="#fff" opacity="0.20" filter="url(#h25)"/>
    <path d="M224 246 L226 280 L229 314" fill="none" stroke="#fff" stroke-width="9.0" stroke-linecap="round" stroke-linejoin="round" opacity="0.34" filter="url(#h7)"/>
    <path d="M227.6 113 L229.8 126 L234.8 139 L240.6 152 L244 162 L246 169" fill="none" stroke="#fff" stroke-width="5.5" stroke-linecap="round" stroke-linejoin="round" opacity="0.24" filter="url(#h3)"/>
    <path d="M233 236 L241 251 L248.6 266" fill="none" stroke="#fff" stroke-width="4.0" stroke-linecap="round" stroke-linejoin="round" opacity="0.08" filter="url(#h2)"/>
    <path d="M256.5 250 L254.6 258 L252.5 266" fill="none" stroke="#000" stroke-width="5.0" stroke-linecap="round" stroke-linejoin="round" opacity="0.14" filter="url(#h25)"/>
    <path d="M268 198 L272 205" fill="none" stroke="#fff" stroke-width="9.0" stroke-linecap="round" stroke-linejoin="round" opacity="0.16" filter="url(#h3)"/>
    <path d="M271.4 206.4 L260 212 L249 215.4 L240 219" fill="none" stroke="#000" stroke-width="5.0" stroke-linecap="round" stroke-linejoin="round" opacity="0.20" filter="url(#h25)"/>
    <path d="M216.6 160 L212.6 172 L208.6 183" fill="none" stroke="#000" stroke-width="1.8" stroke-linecap="round" stroke-linejoin="round" opacity="0.34" filter="url(#h1)"/>
    <path d="M236.4 158 L235.4 171 L228.8 189 L223.2 205" fill="none" stroke="#000" stroke-width="3.2" stroke-linecap="round" stroke-linejoin="round" opacity="0.46" filter="url(#h15)"/>
    <path d="M252.2 186.4 L244.6 199 L235.6 212" fill="none" stroke="#000" stroke-width="2.0" stroke-linecap="round" stroke-linejoin="round" opacity="0.50" filter="url(#h1)"/>
    <path d="M208.2 185 L213 188 L218 190" fill="none" stroke="#000" stroke-width="2.0" stroke-linecap="round" stroke-linejoin="round" opacity="0.44" filter="url(#h1)"/>
    <path d="M238 170 L245.4 167.2 L253 171" fill="none" stroke="#000" stroke-width="1.2" stroke-linecap="round" stroke-linejoin="round" opacity="0.20" filter="url(#h1)"/>
    <path d="M209.4 160.6 L208 170 L206.4 178" fill="none" stroke="#fff" stroke-width="6.5" stroke-linecap="round" stroke-linejoin="round" opacity="0.28" filter="url(#h2)"/>
    <path d="M226.4 158.6 L221 171 L215 183.6" fill="none" stroke="#fff" stroke-width="11.5" stroke-linecap="round" stroke-linejoin="round" opacity="0.38" filter="url(#h25)"/>
    <path d="M246 173.4 L239 188 L231.8 202.4" fill="none" stroke="#fff" stroke-width="12.0" stroke-linecap="round" stroke-linejoin="round" opacity="0.38" filter="url(#h3)"/>
    <path d="M265 195 L254 203.6 L244 211" fill="none" stroke="#fff" stroke-width="10.0" stroke-linecap="round" stroke-linejoin="round" opacity="0.30" filter="url(#h3)"/>
   </g>
   <path d="M235 213.6 L233.4 232 L231.6 249 L238 262 L252 268 L270 262 L290 230 L290 200 L262 205 L246 212 Z" fill="#000" opacity="0.17" filter="url(#b1)"/>
   <ellipse cx="231.4" cy="210.8" rx="1.5" ry="1.2" fill="#1c1c34" filter="url(#b0)"/>
   <path d="M213 244 L217.6 260 L215.6 284 L216.4 300" fill="none" stroke="#808080" stroke-width="1.4" opacity="0.25" filter="url(#b0)"/>

  </g>
  <path d="M213 274 Q237 276.4 262 272.4" fill="none" stroke="#98e0d8" stroke-width="0.65" opacity="0.6"/>
 </svg>
 <div id="band" class="abs"></div>
 <div class="glt" style="left:46px;top:319.30px">FOV: 60</div>
 <div class="glt" style="left:46px;top:324.55px">FPS:&nbsp;&nbsp;&nbsp;&nbsp;73.5</div>
 <div class="glt" style="left:46px;top:329.80px">BO_RENDERING</div>
 <div class="glt" style="left:236.2px;top:319.30px">Mesh: finalscan1.obj</div>
 <div class="glt" style="left:236.2px;top:324.55px">Vertices: 56,634</div>
 <div class="glt" style="left:236.2px;top:329.80px">Faces: 113,268</div>
 <div class="glt" style="left:236.2px;top:335.05px">Selection: v: 0 f: 0</div>
 <div class="glt" style="left:236.2px;top:340.30px">VC</div>
</div>
<div id="statusbar" class="abs">
 <div class="abs" style="left:252px;top:5.4px;width:250.5px;height:2.2px;border-radius:1.1px;background:#bcbcbc"></div>
 <div class="abs" style="left:506px;top:5.2px;width:132.6px;height:2.6px;border-radius:1.3px;background:#8e8e8e"></div>
</div>


<div id="dock" class="abs"></div>
<div id="docktitle2"></div>
<div id="layers" class="abs">
 <div id="lrow" class="abs"></div>
 <div id="lsel" class="abs"></div>
 <svg class="abs" style="left:0;top:-0.3px" width="153" height="9" viewBox="0 0 153 9">
  <path d="M1.2 2.3 L4 4.3 L1.2 6.3 Z" fill="#8a8a8a"/>
  <rect x="7" y="1.6" width="7.6" height="5.6" fill="#eef3ee" stroke="#b9c3c9" stroke-width="0.5"/>
  <path d="M8.2 4.4 L11 2.8 L13.2 4.4 L11 6 Z" fill="#16a83a"/>
  <circle cx="11.3" cy="4.4" r="0.8" fill="#0a5a1c"/>
  <!-- box -->
  <g stroke="#9a9a9a" stroke-width="0.45" fill="#e4e4e4"><rect x="62" y="2.8" width="4.8" height="4.2"/><path d="M62 2.8 L63.2 1.7 H67.8 L66.8 2.8 M67.8 1.7 V5.9 L66.8 7" fill="none"/></g>
  <!-- points -->
  <g fill="#808080"><rect x="70.4" y="1.7" width=".7" height=".7"/><rect x="72.7" y="1.5" width=".7" height=".7"/><rect x="75" y="1.7" width=".7" height=".7"/><rect x="70.2" y="4.1" width=".7" height=".7"/><rect x="75.2" y="4.1" width=".7" height=".7"/><rect x="70.4" y="6.5" width=".7" height=".7"/><rect x="72.7" y="6.8" width=".7" height=".7"/><rect x="75" y="6.5" width=".7" height=".7"/></g>
  <!-- wire -->
  <g stroke="#222" stroke-width="0.55" fill="#dcdcdc"><rect x="79.4" y="1.7" width="5" height="5.6" rx="1.2"/><path d="M79.6 2 L84.2 7 M84.2 2 L79.6 7 M81.9 1.7V7.3" fill="none" stroke-width="0.45"/></g>
  <!-- flat blue -->
  <rect x="88" y="1.3" width="5.4" height="6.2" fill="#cfe6fb"/><rect x="89.6" y="1.3" width="1.8" height="6.2" fill="#f8fcff"/><rect x="92.4" y="1.3" width="1" height="6.2" fill="#8cc0ee"/>
  <!-- red -->
  <path d="M97.4 1.6 L101 1.4 L99.8 4 L100.6 4.2 L98.6 7.4 L96.6 7.4 L97.8 4.8 L96.6 4.6 Z" fill="#e32832"/>
  <!-- green -->
  <rect x="104.8" y="2" width="5.4" height="5" rx="0.8" fill="#6e9e84"/><path d="M105.8 2.9 L109.2 6 M109.2 2.9 L105.8 6" stroke="#3cb46c" stroke-width="1"/>
 </svg>
 <div class="t lt" style="left:18.6px">0</div>
 <div class="t lt" style="left:27.8px">finalscan1 *</div>
</div>
<div class="t" style="left:483.3px;top:188.9px;font-size:5.3px;color:#111">finalscan1.obj</div>
<div id="gbox" class="abs"></div>
<div id="pane" class="abs"></div>
<div id="tabs" class="abs">
 <div id="tabsel" class="abs"></div>
 <i style="left:19.2px"></i><i style="left:38.4px"></i><i style="left:57.4px"></i><i style="left:76.6px"></i><i style="left:95.8px"></i>
 <svg class="abs" style="left:0;top:0" width="115.2" height="8.8" viewBox="0 0 115.2 8.8">
  <g stroke="#a4a4a4" stroke-width="0.45" fill="#f4f4f4"><rect x="4.6" y="2.8" width="4.6" height="4.2"/><path d="M4.6 2.8 L5.8 1.7 H10.6 L9.2 2.8 M10.6 1.7 V5.9 L9.2 7" fill="none"/></g>
  <g fill="#909090"><rect x="24.6" y="1.8" width=".7" height=".7"/><rect x="27" y="1.6" width=".7" height=".7"/><rect x="29.4" y="1.8" width=".7" height=".7"/><rect x="24.4" y="4.2" width=".7" height=".7"/><rect x="29.6" y="4.2" width=".7" height=".7"/><rect x="24.6" y="6.6" width=".7" height=".7"/><rect x="27" y="6.8" width=".7" height=".7"/><rect x="29.4" y="6.6" width=".7" height=".7"/></g>
  <g stroke="#333" stroke-width="0.55" fill="#e0e0e0"><rect x="44.2" y="1.8" width="4.6" height="5.4" rx="1.1"/><path d="M44.4 2.1 L48.6 6.9 M48.6 2.1 L44.4 6.9 M46.5 1.8V7.2" fill="none" stroke-width="0.45"/></g>
  <rect x="63.4" y="1.6" width="5.2" height="6" fill="#cfe6fb"/><rect x="64.9" y="1.6" width="1.8" height="6" fill="#f8fcff"/><rect x="67.7" y="1.6" width="0.9" height="6" fill="#8cc0ee"/>
  <path d="M84.6 1.7 L88 1.5 L87 4 L87.8 4.2 L85.8 7.4 L83.8 7.4 L85 4.8 L83.8 4.6 Z" fill="#e32832"/><rect x="88" y="2.2" width="0.9" height="4.8" fill="#c4c4c4"/>
  <rect x="102.8" y="2" width="5.8" height="5" rx="1.2" fill="#8a948e"/><rect x="103.6" y="2.8" width="4.2" height="3.2" rx="0.5" fill="#36b468"/><rect x="104.8" y="3.7" width="1.8" height="1.2" fill="#e4f4ea"/>
 </svg>
</div>
<div class="t lab" style="top:218.8px">Shading</div>
<div class="t lab" style="top:233.0px">Color</div>
<div class="t lab" style="top:247.3px">Back-Face</div>
<div class="seg" style="left:551px;top:218.5px;width:42.5px"><b style="width:13.4px"><span style="left:3px">Vert</span></b><span style="left:16px">Face</span><span style="left:30px">None</span></div>
<div class="seg" style="left:551px;top:232.8px;width:60.5px"><b style="width:13.4px"><span style="left:3px">Vert</span></b><span style="left:16px">Mesh</span><span style="left:31.4px">User-Def</span><div class="abs" style="left:53.5px;top:0;width:7px;height:6.3px;background:#c4c4c4"></div></div>
<div class="seg" style="left:551px;top:247.2px;width:66.6px"><b style="width:17px"><span style="left:2.6px">Single</span></b><span style="left:19.8px">Double</span><span style="left:39px">Fancy</span><span style="left:56.3px">Cull</span></div>
<div class="abs" style="left:551px;top:262.6px;width:9.8px;height:3px;background:#c6c6c6;border-radius:0.8px"></div>
<div class="t" style="left:553.8px;top:284.4px;font-size:6.15px;color:#000;-webkit-text-stroke:0.1px #000">apply to all visible layers</div>
<div class="abs" style="left:621.8px;top:284.6px;width:5.6px;height:5.6px;background:#fff;border-radius:1px;box-shadow:0 0 0 0.4px #c8c8c8"></div>
<div id="logbox" class="abs">
<div class="lg" style="top:0.6px">Applied filter Remove Zero Area Faces in 14 msec</div>
<div class="lg" style="top:5.6px">Filter failed: Mesh has some not 2-manifold edges,</div>
<div class="lg" style="top:9.8px">filter require edge manifoldness</div>
<div class="lg" style="top:14.2px">Filter failed: Mesh has some not 2-manifold edges,</div>
<div class="lg" style="top:18.5px">filter require edge manifoldness</div>
<div class="lg b" style="top:22.9px">depth Smoothed 34634 vertices</div>
<div class="lg" style="top:27.4px">Applied filter Depth Smooth in 36 msec</div>
<div class="lg" style="top:31.9px">Applied filter HC Laplacian Smooth in 53 msec</div>
<div class="lg" style="top:36.3px">Applied filter Laplacian smooth (surface preserve) in</div>
<div class="lg" style="top:40.7px">36 msec</div>
<div class="lg" style="top:45.2px">Applied filter Smooth Face Normals in 35 msec</div>
<div class="lg" style="top:51.8px">Started Mode Z-painting</div>

 <div class="abs" style="left:1.4px;top:57.8px;width:0.6px;height:5.4px;background:#222"></div>
 <div class="abs" style="left:144.4px;top:0;width:0;height:69px;border-left:0.5px dotted #d4d4d4"></div>
 <div class="abs" style="left:147.8px;top:39px;width:3px;height:29.5px;border-radius:1.5px;background:#c2c2c2"></div>
</div>

</div>
</body></html>
